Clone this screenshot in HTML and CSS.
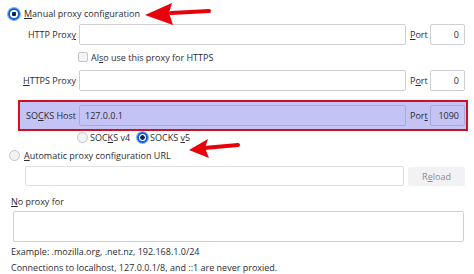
FILE: index.html
```html
<!DOCTYPE html>
<html lang="en">
<head>
    <meta charset="UTF-8">
    <title>Connection Settings</title>
    <link rel="stylesheet" href="styles.css">
</head>
<body>
    <div class="panel">
        <div class="radio-line manual">
            <span class="radio on"></span>
            <span><u>M</u>anual proxy configuration</span>
        </div>

        <div class="proxy-row http">
            <span class="field-label">HTTP Prox<u>y</u></span>
            <div class="input"></div>
            <span class="port-label"><u>P</u>ort</span>
            <div class="input port">0</div>
        </div>

        <div class="check-line">
            <span class="checkbox"></span>
            <span>Al<u>s</u>o use this proxy for HTTPS</span>
        </div>

        <div class="proxy-row https">
            <span class="field-label"><u>H</u>TTPS Proxy</span>
            <div class="input"></div>
            <span class="port-label">P<u>o</u>rt</span>
            <div class="input port">0</div>
        </div>

        <div class="socks-box">
            <div class="proxy-row socks">
                <span class="field-label">SO<u>C</u>KS Host</span>
                <div class="input">127.0.0.1</div>
                <span class="port-label">Por<u>t</u></span>
                <div class="input port">1090</div>
            </div>
        </div>

        <div class="socks-versions">
            <span class="radio"></span>
            <span class="v4">SOC<u>K</u>S v4</span>
            <span class="radio on"></span>
            <span>SOCKS <u>v</u>5</span>
        </div>

        <div class="radio-line auto">
            <span class="radio"></span>
            <span><u>A</u>utomatic proxy configuration URL</span>
        </div>

        <div class="auto-row">
            <div class="input url"></div>
            <div class="button">R<u>e</u>load</div>
        </div>

        <div class="plain-label"><u>N</u>o proxy for</div>
        <div class="input textarea"></div>
        <div class="hint">Example: .mozilla.org, .net.nz, 192.168.1.0/24</div>
        <div class="hint">Connections to localhost, 127.0.0.1/8, and ::1 are never proxied.</div>

        <!-- annotation arrows -->
        <svg class="arrow arrow-manual" width="80" height="26" viewBox="0 0 80 26">
            <path d="M28 12 L66 10" stroke="#e8000b" stroke-width="4" stroke-linecap="round" fill="none"/>
            <polygon points="2,14 29,2 26,12 30,24" fill="#e8000b"/>
        </svg>
        <svg class="arrow arrow-socks" width="56" height="22" viewBox="0 0 56 22">
            <path d="M16 10 L50 7" stroke="#e8000b" stroke-width="4" stroke-linecap="round" fill="none"/>
            <polygon points="1,12 20,1 17,10 21,20" fill="#e8000b"/>
        </svg>
    </div>
</body>
</html>
```

FILE: styles.css
```css
body {
    margin: 0;
    background: #fff;
    font-family: "Open Sans", "Noto Sans", sans-serif;
    font-size: 9px;
    color: #2b2a33;
}
u {
    text-decoration-thickness: 1px;
    text-underline-offset: 1px;
}
.panel {
    position: relative;
    width: 474px;
    height: 274px;
    overflow: hidden;
}
.radio-line, .check-line, .socks-versions {
    display: flex;
    align-items: center;
    height: 13px;
}
.manual {
    margin-top: 7px;
    padding-left: 8px;
    gap: 4px;
}
.radio {
    box-sizing: border-box;
    width: 11px;
    height: 11px;
    border-radius: 50%;
    border: 1px solid #c4c4c8;
    background: #f3f3f5;
    flex: none;
}
.radio.on {
    border: 2px solid #0b5fd8;
    background: radial-gradient(circle, #12206b 0 2px, #fff 2.5px);
    box-shadow: 0 0 0 1px #7fb0f0;
}
.manual .radio {
    width: 12px;
    height: 12px;
}
.checkbox {
    box-sizing: border-box;
    width: 10px;
    height: 10px;
    border: 1px solid #c4c4c8;
    border-radius: 2px;
    background: #f3f3f5;
    flex: none;
}
.proxy-row {
    display: grid;
    grid-template-columns: 79px 327px 24px 35px;
    align-items: center;
    height: 21px;
}
.http {
    margin-top: 4px;
}
.https {
    margin-top: 7px;
}
.field-label {
    text-align: right;
    padding-right: 3px;
}
.port-label {
    padding-left: 4px;
}
.input {
    box-sizing: border-box;
    height: 21px;
    border: 1px solid #cfcfd6;
    border-radius: 2px;
    background: #fff;
    display: flex;
    align-items: center;
    padding: 0 5px;
}
.input.port {
    justify-content: flex-end;
}
.check-line {
    margin-top: 6px;
    height: 12px;
    padding-left: 78px;
    gap: 3px;
}
.socks-box {
    box-sizing: border-box;
    width: 450px;
    height: 31px;
    margin-top: 9px;
    margin-left: 18px;
    padding-top: 3px;
    border: 2px solid #cf1020;
    background: #c3c3f6;
}
.socks {
    grid-template-columns: 59px 327px 24px 35px;
}
.socks .input {
    background: #c3c3f6;
    border-color: #a9a9dc;
}
.socks-versions {
    height: 12px;
    padding-left: 77px;
    gap: 2px;
}
.socks-versions .v4 {
    margin-right: 5px;
}
.auto {
    margin-top: 6px;
    height: 12px;
    padding-left: 9px;
    gap: 4px;
}
.auto-row {
    display: flex;
    gap: 4px;
    margin-top: 5px;
    padding-left: 25px;
}
.url {
    width: 379px;
    height: 20px;
    border-color: #e0e0e6;
}
.button {
    width: 57px;
    height: 19px;
    margin-top: 1px;
    background: #f2f2f5;
    color: #8d8d94;
    display: flex;
    align-items: center;
    justify-content: center;
    border-radius: 2px;
}
.plain-label {
    margin-top: 10px;
    height: 12px;
    line-height: 12px;
    padding-left: 11px;
}
.textarea {
    width: 451px;
    height: 31px;
    margin-top: 3px;
    margin-left: 13px;
}
.hint {
    margin-top: 4px;
    height: 12px;
    line-height: 12px;
    padding-left: 11px;
}
.arrow {
    position: absolute;
}
.arrow-manual {
    left: 143px;
    top: 1px;
}
.arrow-socks {
    left: 188px;
    top: 138px;
}
```
